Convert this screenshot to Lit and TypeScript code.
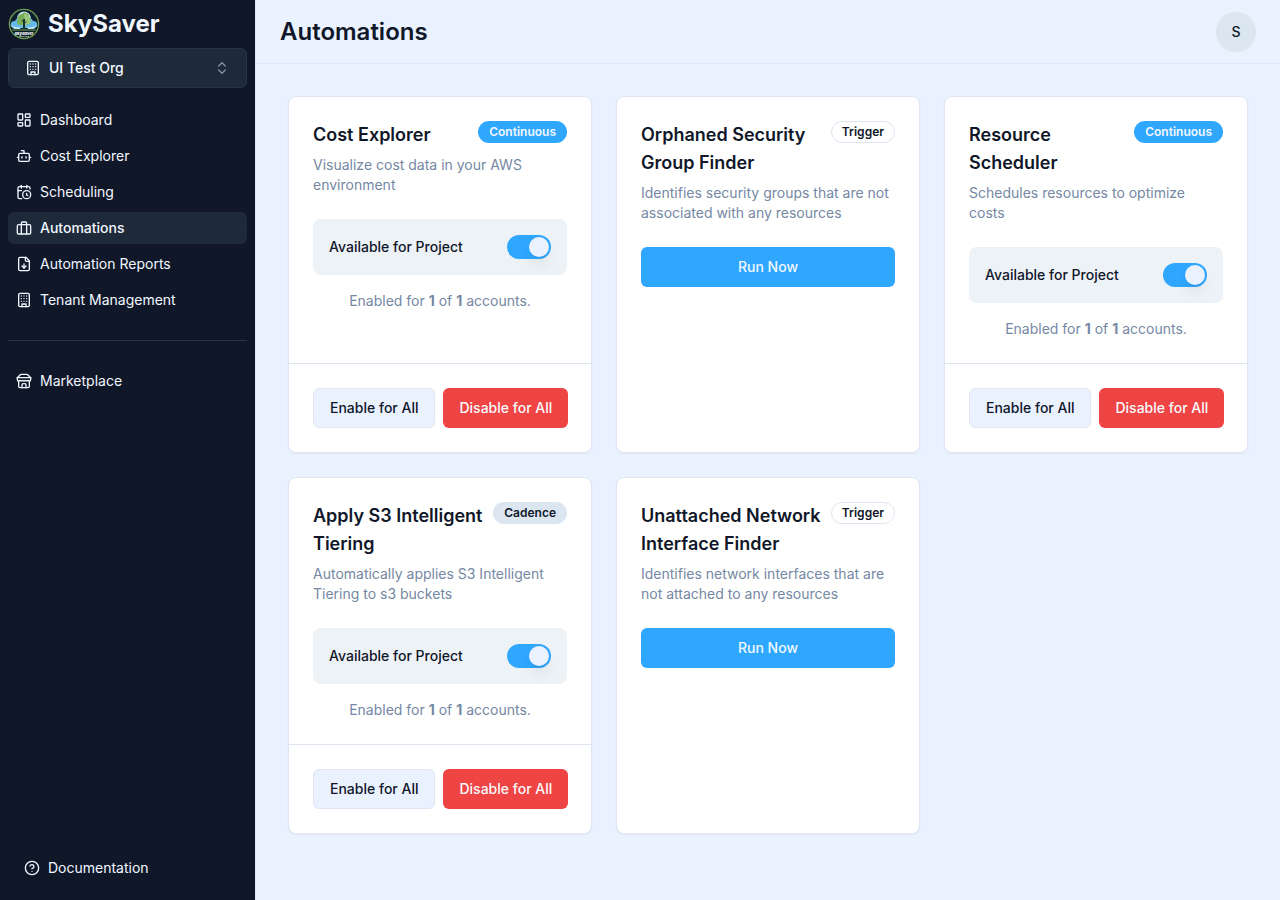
import { LitElement, html, css, svg, nothing, type TemplateResult } from "lit";
import { customElement, property } from "lit/decorators.js";
import { classMap } from "lit/directives/class-map.js";

const icons: Record<string, TemplateResult> = {
  dashboard: svg`<rect width="7" height="9" x="3" y="3" rx="1"/><rect width="7" height="5" x="14" y="3" rx="1"/><rect width="7" height="9" x="14" y="12" rx="1"/><rect width="7" height="5" x="3" y="16" rx="1"/>`,
  bot: svg`<path d="M12 8V4H8"/><rect width="16" height="12" x="4" y="8" rx="2"/><path d="M2 14h2"/><path d="M20 14h2"/><path d="M15 13v2"/><path d="M9 13v2"/>`,
  schedule: svg`<path d="M21 7.5V6a2 2 0 0 0-2-2H5a2 2 0 0 0-2 2v14a2 2 0 0 0 2 2h3.5"/><path d="M16 2v4"/><path d="M8 2v4"/><path d="M3 10h5"/><path d="M17.5 17.5 16 16.3V14"/><circle cx="16" cy="16" r="6"/>`,
  briefcase: svg`<rect width="20" height="14" x="2" y="7" rx="2"/><path d="M16 21V5a2 2 0 0 0-2-2h-4a2 2 0 0 0-2 2v16"/>`,
  report: svg`<path d="M15 2H6a2 2 0 0 0-2 2v16a2 2 0 0 0 2 2h12a2 2 0 0 0 2-2V7Z"/><path d="M14 2v4a2 2 0 0 0 2 2h4"/><path d="M12 18v-6"/><path d="m9 15 3 3 3-3"/>`,
  building: svg`<rect width="16" height="20" x="4" y="2" rx="2"/><path d="M9 22v-4h6v4"/><path d="M8 6h.01"/><path d="M16 6h.01"/><path d="M12 6h.01"/><path d="M12 10h.01"/><path d="M12 14h.01"/><path d="M16 10h.01"/><path d="M16 14h.01"/><path d="M8 10h.01"/><path d="M8 14h.01"/>`,
  store: svg`<path d="m2 7 4.41-4.41A2 2 0 0 1 7.83 2h8.34a2 2 0 0 1 1.42.59L22 7"/><path d="M4 12v8a2 2 0 0 0 2 2h12a2 2 0 0 0 2-2v-8"/><path d="M15 22v-4a2 2 0 0 0-2-2h-2a2 2 0 0 0-2 2v4"/><path d="M2 7h20"/><path d="M22 7v3a2 2 0 0 1-2 2a2.7 2.7 0 0 1-1.59-.63.7.7 0 0 0-.82 0A2.7 2.7 0 0 1 16 12a2.7 2.7 0 0 1-1.59-.63.7.7 0 0 0-.82 0A2.7 2.7 0 0 1 12 12a2.7 2.7 0 0 1-1.59-.63.7.7 0 0 0-.82 0A2.7 2.7 0 0 1 8 12a2.7 2.7 0 0 1-1.59-.63.7.7 0 0 0-.82 0A2.7 2.7 0 0 1 4 12a2 2 0 0 1-2-2V7"/>`,
  help: svg`<circle cx="12" cy="12" r="10"/><path d="M9.09 9a3 3 0 0 1 5.83 1c0 2-3 3-3 3"/><path d="M12 17h.01"/>`,
  chevrons: svg`<path d="m7 15 5 5 5-5"/><path d="m7 9 5-5 5 5"/>`,
};

const icon = (name: string) => html`<svg
  class="icon"
  viewBox="0 0 24 24"
  fill="none"
  stroke="currentColor"
  stroke-width="2"
  stroke-linecap="round"
  stroke-linejoin="round"
  aria-hidden="true"
>${icons[name]}</svg>`;

const base = css`
  * {
    box-sizing: border-box;
    margin: 0;
  }
  button {
    font: inherit;
    cursor: pointer;
  }
  a {
    color: inherit;
    text-decoration: none;
  }
  .icon {
    display: block;
    flex: none;
    width: 16px;
    height: 16px;
  }
`;

type Kind = "Continuous" | "Trigger" | "Cadence";

interface Automation {
  id: string;
  name: string;
  description: string;
  kind: Kind;
}

const automations: Automation[] = [
  { id: "cost-explorer", name: "Cost Explorer", description: "Visualize cost data in your AWS environment", kind: "Continuous" },
  { id: "security-groups", name: "Orphaned Security Group Finder", description: "Identifies security groups that are not associated with any resources", kind: "Trigger" },
  { id: "scheduler", name: "Resource Scheduler", description: "Schedules resources to optimize costs", kind: "Continuous" },
  { id: "s3-tiering", name: "Apply S3 Intelligent Tiering", description: "Automatically applies S3 Intelligent Tiering to s3 buckets", kind: "Cadence" },
  { id: "network-interfaces", name: "Unattached Network Interface Finder", description: "Identifies network interfaces that are not attached to any resources", kind: "Trigger" },
];

@customElement("automation-card")
class AutomationCard extends LitElement {
  @property({ attribute: false }) item!: Automation;

  static styles = [
    base,
    css`
      :host {
        display: flex;
        flex-direction: column;
        box-sizing: border-box;
        min-width: 0;
        background: #fff;
        border: 1px solid #dfe6f2;
        border-radius: 8px;
        box-shadow: 0 1px 2px rgb(0 0 0 / 0.05);
      }
      .head {
        display: flex;
        flex-direction: column;
        gap: 6px;
        padding: 24px;
      }
      .title-row {
        display: flex;
        align-items: flex-start;
        justify-content: space-between;
        gap: 8px;
      }
      .title {
        font-size: 18px;
        line-height: 28px;
        font-weight: 600;
      }
      .badge {
        flex: none;
        padding: 2px 10px;
        border: 1px solid transparent;
        border-radius: 11px;
        font-size: 12px;
        line-height: 16px;
        font-weight: 600;
      }
      .continuous {
        background: #2fa7ff;
        color: #f1f7ff;
      }
      .trigger {
        border-color: #dfe6f2;
      }
      .cadence {
        background: #dbe6f0;
      }
      .description,
      .accounts {
        color: #7588a3;
      }
      .body {
        display: flex;
        flex-direction: column;
        flex: 1;
        gap: 16px;
        padding: 0 24px 24px;
      }
      .available {
        display: flex;
        align-items: center;
        justify-content: space-between;
        padding: 16px;
        border-radius: 8px;
        background: #edf2f7;
        font-weight: 500;
      }
      .switch {
        appearance: none;
        display: flex;
        justify-content: flex-start;
        width: 44px;
        height: 24px;
        padding: 2px;
        border-radius: 12px;
        background: #dbe6f0;
        cursor: pointer;
      }
      .switch:checked {
        justify-content: flex-end;
        background: #2fa7ff;
      }
      .switch::before {
        content: "";
        width: 20px;
        height: 20px;
        border-radius: 50%;
        background: #eaf1ff;
        box-shadow: 0 10px 15px -3px rgb(0 0 0 / 0.1), 0 4px 6px -4px rgb(0 0 0 / 0.1);
      }
      .accounts {
        text-align: center;
      }
      .accounts b {
        font-weight: 700;
      }
      .actions {
        display: flex;
        gap: 8px;
        padding: 24px;
        border-top: 1px solid #dfe6f2;
      }
      .button {
        flex: none;
        height: 40px;
        padding: 0 16px;
        border: 0;
        border-radius: 6px;
        font-weight: 500;
        white-space: nowrap;
      }
      .primary {
        background: #2fa7ff;
        color: #f1f7ff;
      }
      .outline {
        border: 1px solid #dfe6f2;
        background: #eaf1ff;
        color: #101729;
      }
      .danger {
        background: #ef4444;
        color: #f8fafc;
      }
    `,
  ];

  render() {
    const { id, name, description, kind } = this.item;
    const manual = kind === "Trigger";
    return html`
      <header class="head">
        <div class="title-row">
          <h2 class="title">${name}</h2>
          <span class=${classMap({ badge: true, [kind.toLowerCase()]: true })}>${kind}</span>
        </div>
        <p class="description">${description}</p>
      </header>
      <div class="body">
        ${manual
          ? html`<button class="button primary" type="button">Run Now</button>`
          : html`
              <div class="available">
                <label for=${id}>Available for Project</label>
                <input class="switch" id=${id} type="checkbox" role="switch" checked />
              </div>
              <p class="accounts">Enabled for <b>1</b> of <b>1</b> accounts.</p>
            `}
      </div>
      ${manual
        ? nothing
        : html`<footer class="actions">
            <button class="button outline" type="button">Enable for All</button>
            <button class="button danger" type="button">Disable for All</button>
          </footer>`}
    `;
  }
}

const navigation = [
  { label: "Dashboard", icon: "dashboard" },
  { label: "Cost Explorer", icon: "bot" },
  { label: "Scheduling", icon: "schedule" },
  { label: "Automations", icon: "briefcase", active: true },
  { label: "Automation Reports", icon: "report" },
  { label: "Tenant Management", icon: "building" },
];

@customElement("app-sidebar")
class AppSidebar extends LitElement {
  static styles = [
    base,
    css`
      :host {
        display: flex;
        flex-direction: column;
        box-sizing: border-box;
        padding: 8px;
        background: #101729;
        border-right: 1px solid #dfe6f2;
        color: #f1f7ff;
      }
      .brand {
        display: flex;
        align-items: center;
        gap: 8px;
        margin-bottom: 8px;
        font-size: 24px;
        line-height: 32px;
        font-weight: 700;
      }
      .logo {
        display: block;
        width: 32px;
        height: 32px;
      }
      .logo-name {
        font-size: 4px;
        font-style: italic;
        font-weight: 800;
        text-anchor: middle;
        fill: #fff;
      }
      .org {
        display: flex;
        align-items: center;
        gap: 8px;
        height: 40px;
        margin-bottom: 16px;
        padding: 0 16px;
        border: 1px solid #25344b;
        border-radius: 6px;
        background: #1e293a;
        color: inherit;
        font-weight: 500;
      }
      .org-name {
        flex: 1;
        text-align: left;
      }
      .chevrons {
        opacity: 0.5;
      }
      .nav {
        display: flex;
        flex-direction: column;
        gap: 4px;
      }
      .link {
        display: flex;
        align-items: center;
        gap: 8px;
        padding: 6px 8px;
        border-radius: 6px;
      }
      .active {
        background: #1e293a;
        font-weight: 500;
      }
      .divider {
        width: 100%;
        height: 1px;
        margin: 24px 0;
        border: 0;
        background: #25344b;
      }
      .footer {
        margin-top: auto;
        padding: 8px;
      }
    `,
  ];

  render() {
    return html`
      <div class="brand">
        <svg class="logo" viewBox="0 0 32 32" aria-hidden="true">
          <circle cx="16" cy="16" r="14.6" fill="#0c1f2a" stroke="#6b9c50" stroke-width="1.3" />
          <path d="M9 11a7 7 0 0 1 14-1l-2 4H10Z" fill="#c4e6f5" />
          <path d="M5 20a4 4 0 0 1-2-5 4 4 0 0 1 4-2 5 5 0 0 1 5-3h8a5 5 0 0 1 5 3 4 4 0 0 1 4 2 4 4 0 0 1-2 5Z" fill="#65b8ea" />
          <path d="M3 17q5 3 10 2l-1 2H6Zm26 0q-5 3-10 2l1 2h6Z" fill="#b5def5" />
          <path d="M12 17a3.5 3.5 0 0 1-2-6 4 4 0 0 1 4-5 4 4 0 0 1 7 3 4 4 0 0 1 0 7l-3 1Z" fill="#79ae57" />
          <path d="M16 6a4 4 0 0 1 5 4 3.5 3.5 0 0 1 0 6l-4 1Z" fill="#9ac57a" />
          <path d="M15 11h2v9l2 2h-6l2-2Z" fill="#16332b" />
          <path d="m16 15-2.500-3m2.500 4 2.500-3" fill="none" stroke="#16332b" stroke-width="0.8" />
          <path d="M4 22h24" stroke="#6b9c50" stroke-width="1" />
          <text class="logo-name" x="16" y="26.500">SkySaver</text>
          <path d="M11 28.500h10" stroke="#8fa59c" stroke-width="1.2" stroke-dasharray="1.4 .4" />
        </svg>
        <span>SkySaver</span>
      </div>
      <button class="org" type="button" aria-haspopup="listbox">
        ${icon("building")}
        <span class="org-name">UI Test Org</span>
        <span class="chevrons">${icon("chevrons")}</span>
      </button>
      <nav class="nav" aria-label="Main">
        ${navigation.map(
          (n) => html`<a class=${classMap({ link: true, active: !!n.active })} href="#" aria-current=${n.active ? "page" : nothing}>
            ${icon(n.icon)}<span>${n.label}</span>
          </a>`
        )}
      </nav>
      <hr class="divider" />
      <nav class="nav" aria-label="Marketplace">
        <a class="link" href="#">${icon("store")}<span>Marketplace</span></a>
      </nav>
      <div class="footer">
        <a class="link" href="#">${icon("help")}<span>Documentation</span></a>
      </div>
    `;
  }
}

@customElement("app-root")
class AppRoot extends LitElement {
  static styles = [
    base,
    css`
      :host {
        display: grid;
        grid-template-columns: 256px minmax(0, 1fr);
        min-height: 100vh;
        background: #eaf1ff;
        color: #101729;
        font-family: Inter, "Liberation Sans", sans-serif;
        font-size: 14px;
        line-height: 20px;
      }
      .top {
        display: flex;
        align-items: center;
        justify-content: space-between;
        height: 64px;
        padding: 0 24px;
        border-bottom: 1px solid #dfe6f2;
      }
      .heading {
        font-size: 24px;
        line-height: 32px;
        font-weight: 600;
      }
      .avatar {
        width: 40px;
        height: 40px;
        padding: 0;
        border: 0;
        border-radius: 50%;
        background: #dce6f0;
        color: inherit;
        font-weight: 500;
      }
      .grid {
        display: grid;
        grid-template-columns: repeat(3, minmax(0, 1fr));
        grid-auto-rows: 1fr;
        gap: 24px;
        padding: 32px;
      }
    `,
  ];

  render() {
    return html`
      <app-sidebar></app-sidebar>
      <div>
        <header class="top">
          <h1 class="heading">Automations</h1>
          <button class="avatar" type="button" aria-label="Account S">S</button>
        </header>
        <main class="grid">
          ${automations.map((a) => html`<automation-card .item=${a}></automation-card>`)}
        </main>
      </div>
    `;
  }
}
